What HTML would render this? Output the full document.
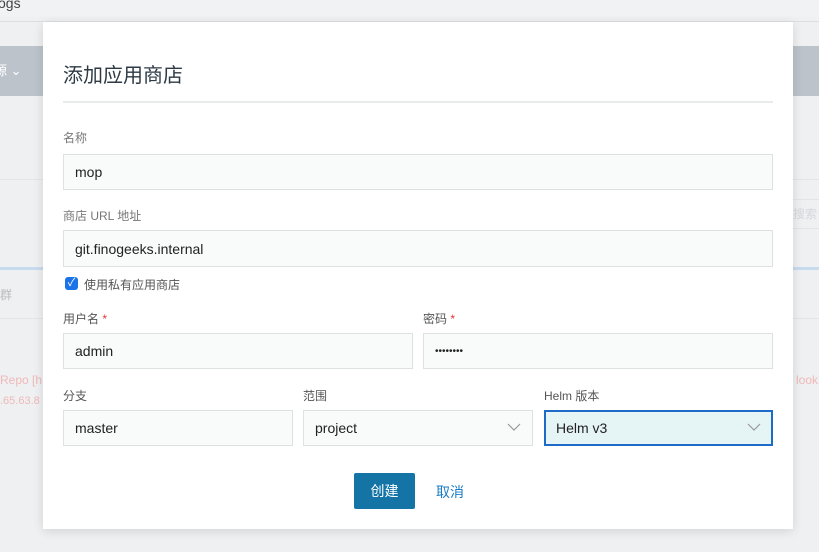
<!DOCTYPE html>
<html><head><meta charset="utf-8"><style>
*{box-sizing:border-box;margin:0;padding:0}
body{width:819px;height:552px;overflow:hidden;background:#eef0f2;font-family:"Liberation Sans","Noto Sans CJK SC",sans-serif;position:relative;color:#333}
.abs{position:absolute}
.top{left:0;top:0;width:819px;height:17px;background:#f1f2f4;overflow:hidden}
.modal{left:43px;top:22px;width:750px;height:507px;background:#fff;box-shadow:0 2px 10px rgba(0,0,0,.12)}
.lbl{font-size:12px;color:#777}
.inp{background:#f9fafa;border:1px solid #dde1e2;font-size:14px;color:#222;padding-left:11px;display:flex;align-items:center}
.req{color:#e33}
.chev{position:absolute;right:11px;top:11px}
</style></head><body>
<div class="abs top"><span class="abs" style="left:-2px;top:-5px;font-size:14px;color:#444">ogs</span></div>
<div class="abs" style="left:0;top:21px;width:819px;height:1px;background:#dcdfe2"></div>
<div class="abs" style="left:0;top:46px;width:43px;height:50px;background:#bcc3cb;color:#fff;font-size:13px;line-height:50px;overflow:hidden;white-space:nowrap"><span style="margin-left:-6px">源 ⌄</span></div>
<div class="abs" style="left:793px;top:46px;width:26px;height:50px;background:#bcc3cb"></div>
<div class="abs" style="left:0;top:179px;width:43px;height:1px;background:#e2e5e8"></div>
<div class="abs" style="left:793px;top:179px;width:26px;height:1px;background:#e2e5e8"></div>
<div class="abs" style="left:793px;top:199px;width:26px;height:30px;border-top:1px solid #e2e5e8;border-bottom:1px solid #e2e5e8;font-size:12px;color:#d5d8dc;line-height:28px">搜索</div>
<div class="abs" style="left:0;top:267px;width:43px;height:3px;background:#c8dbee"></div>
<div class="abs" style="left:793px;top:267px;width:26px;height:3px;background:#c8dbee"></div>
<div class="abs" style="left:0;top:286px;font-size:12px;color:#bbb">群</div>
<div class="abs" style="left:0;top:318px;width:43px;height:1px;background:#e2e5e8"></div>
<div class="abs" style="left:793px;top:318px;width:26px;height:1px;background:#e2e5e8"></div>
<div class="abs" style="left:0;top:373px;font-size:12px;color:#f0b8b8">Repo [h</div>
<div class="abs" style="left:0;top:395px;font-size:11px;color:#f0b8b8">.65.63.8</div>
<div class="abs" style="left:796px;top:373px;font-size:12px;color:#f0b8b8">look</div>

<div class="abs modal"></div>
<div class="abs" style="left:63px;top:59px;font-size:20px;color:#2e3a45">添加应用商店</div>
<div class="abs" style="left:63px;top:101px;width:710px;height:2px;background:#e8ebeb"></div>

<div class="abs lbl" style="left:63px;top:129px">名称</div>
<div class="abs inp" style="left:63px;top:154px;width:710px;height:36px">mop</div>
<div class="abs lbl" style="left:63px;top:207px">商店 URL 地址</div>
<div class="abs inp" style="left:63px;top:230px;width:710px;height:37px">git.finogeeks.internal</div>
<div class="abs" style="left:65px;top:277px;width:13px;height:13px;background:#1a73e8;border-radius:3px;color:#fff;font-size:11px;line-height:13px;text-align:center">✓</div>
<div class="abs lbl" style="left:84px;top:276px;color:#555">使用私有应用商店</div>

<div class="abs lbl" style="left:63px;top:310px;color:#555">用户名 <span class="req">*</span></div>
<div class="abs lbl" style="left:423px;top:310px;color:#555">密码 <span class="req">*</span></div>
<div class="abs inp" style="left:63px;top:333px;width:350px;height:36px">admin</div>
<div class="abs inp" style="left:423px;top:333px;width:350px;height:36px;font-size:10px">••••••••</div>

<div class="abs lbl" style="left:63px;top:387px;color:#555">分支</div>
<div class="abs lbl" style="left:303px;top:387px;color:#555">范围</div>
<div class="abs lbl" style="left:544px;top:387px;color:#555">Helm 版本</div>
<div class="abs inp" style="left:63px;top:410px;width:230px;height:36px">master</div>
<div class="abs inp" style="left:303px;top:410px;width:230px;height:36px">project<svg class="chev" width="14" height="10" viewBox="0 0 14 10"><path d="M1 2l6 6 6-6" fill="none" stroke="#999" stroke-width="1.2"/></svg></div>
<div class="abs inp" style="left:544px;top:410px;width:229px;height:36px;background:#e5f4f5;border:2px solid #1c6bc7;padding-left:10px">Helm v3<svg class="chev" style="top:10px;right:10px" width="14" height="10" viewBox="0 0 14 10"><path d="M1 2l6 6 6-6" fill="none" stroke="#999" stroke-width="1.2"/></svg></div>

<div class="abs" style="left:354px;top:473px;width:61px;height:36px;background:#1574a6;border-radius:2px;color:#fff;font-size:14px;line-height:36px;text-align:center">创建</div>
<div class="abs" style="left:436px;top:482px;font-size:14px;color:#1a7cc6">取消</div>
</body></html>
